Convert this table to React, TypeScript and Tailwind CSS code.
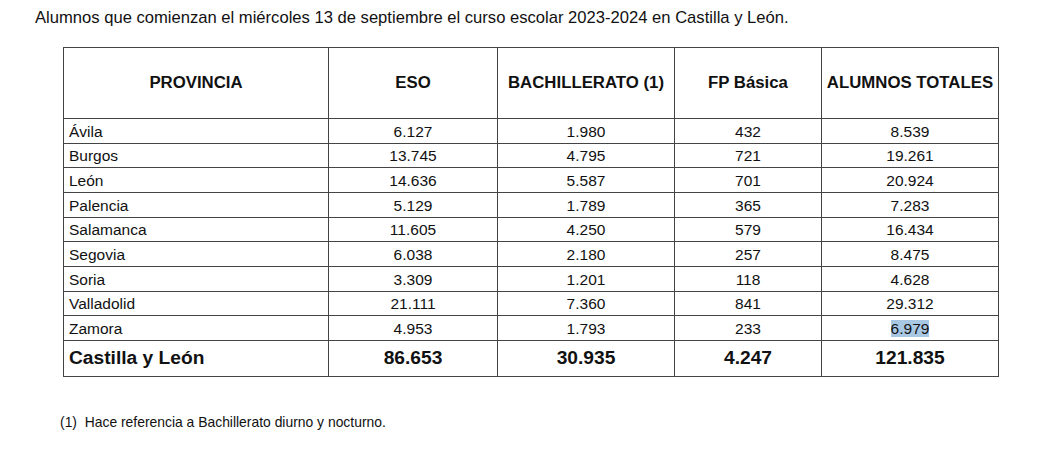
import React from "react";

const rows: [string, string, string, string, string][] = [
  ["Ávila", "6.127", "1.980", "432", "8.539"],
  ["Burgos", "13.745", "4.795", "721", "19.261"],
  ["León", "14.636", "5.587", "701", "20.924"],
  ["Palencia", "5.129", "1.789", "365", "7.283"],
  ["Salamanca", "11.605", "4.250", "579", "16.434"],
  ["Segovia", "6.038", "2.180", "257", "8.475"],
  ["Soria", "3.309", "1.201", "118", "4.628"],
  ["Valladolid", "21.111", "7.360", "841", "29.312"],
  ["Zamora", "4.953", "1.793", "233", "6.979"],
];

export default function App() {
  return (
    <div className="w-[1051px] h-[475px] bg-white text-[#111] font-['Liberation_Sans',Arial,sans-serif]">
      <p className="pl-[35px] pt-[8px] text-[16.6px] leading-[20px]">
        Alumnos que comienzan el miércoles 13 de septiembre el curso escolar 2023-2024 en Castilla y León.
      </p>
      <table className="ml-[63px] mt-[19px] border-collapse border border-[#555] text-[15.5px]">
        <colgroup>
          <col className="w-[265px]" />
          <col className="w-[169px]" />
          <col className="w-[177px]" />
          <col className="w-[147px]" />
          <col className="w-[177px]" />
        </colgroup>
        <thead>
          <tr className="h-[71px] font-bold text-[16.8px]">
            <th className="border border-[#444] text-center">PROVINCIA</th>
            <th className="border border-[#444] text-center">ESO</th>
            <th className="border border-[#444] text-center">BACHILLERATO (1)</th>
            <th className="border border-[#444] text-center">FP Básica</th>
            <th className="border border-[#444] text-center">ALUMNOS TOTALES</th>
          </tr>
        </thead>
        <tbody>
          {rows.map((r, i) => (
            <tr key={r[0]} className="h-[24.67px] leading-[18px]">
              <td className="border border-[#444] pl-[5px] pt-[2px]">{r[0]}</td>
              <td className="border border-[#444] text-center pt-[2px]">{r[1]}</td>
              <td className="border border-[#444] text-center pt-[2px]">{r[2]}</td>
              <td className="border border-[#444] text-center pt-[2px]">{r[3]}</td>
              <td className="border border-[#444] text-center pt-[2px]">
                {i === rows.length - 1 ? <span className="bg-[#a8c7e3]">{r[4]}</span> : r[4]}
              </td>
            </tr>
          ))}
          <tr className="h-[36px] font-bold text-[19.2px]">
            <td className="border border-[#444] pl-[5px]">Castilla y León</td>
            <td className="border border-[#444] text-center">86.653</td>
            <td className="border border-[#444] text-center">30.935</td>
            <td className="border border-[#444] text-center">4.247</td>
            <td className="border border-[#444] text-center">121.835</td>
          </tr>
        </tbody>
      </table>
      <p className="pl-[60px] mt-[37px] text-[13.9px] leading-[16px]">
        (1)&nbsp;&nbsp;Hace referencia a Bachillerato diurno y nocturno.
      </p>
    </div>
  );
}
